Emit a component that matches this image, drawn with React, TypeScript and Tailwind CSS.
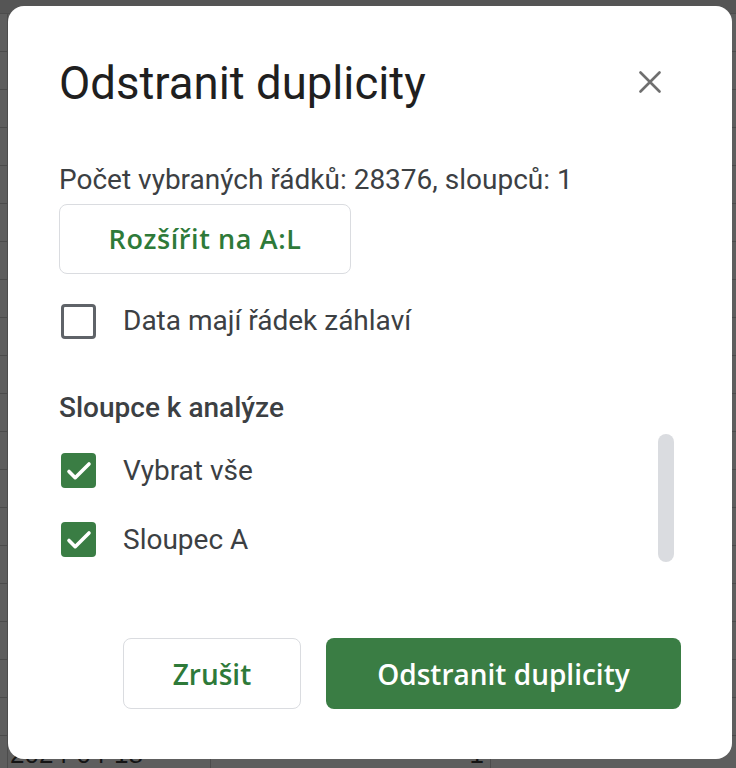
import React from "react";

const rows = Array.from({ length: 20 }, (_, i) => i);

const Check = ({ checked }: { checked: boolean }) =>
    checked ? (
        <div className="w-[35px] h-[35px] rounded-[4px] bg-[#3a7d44] flex items-center justify-center">
            <svg width="28" height="28" viewBox="0 0 28 28" fill="none">
                <path d="M4 14.5l6.2 6.2L24 7" stroke="white" strokeWidth="3.6" strokeLinecap="round" strokeLinejoin="round" />
            </svg>
        </div>
    ) : (
        <div className="w-[35px] h-[35px] rounded-[4px] border-[3px] border-[#5f6368]" />
    );

export default function App() {
    return (
        <div className="relative w-full h-[768px] overflow-hidden bg-[#5e5e5e] font-['Roboto',sans-serif]">
            {/* sheet under the scrim */}
            <div className="flex flex-col">
                <div className="h-[14px] border-b border-[#4c4c4c] bg-[#555555]" />
                {rows.map((r) => (
                    <div key={r} className="h-[38px] flex border-b border-[#4c4c4c]">
                        <div className="w-[8px] border-r border-[#4c4c4c]" />
                        <div className="w-[203px] border-r border-[#4c4c4c] pl-[2px] flex items-center text-[26px] text-[#141414] font-['Liberation_Sans',sans-serif]">
                            {r === 19 ? "2024-04-18" : ""}
                        </div>
                        <div className="w-[280px] border-r border-[#4c4c4c] pr-[6px] flex items-center justify-end text-[26px] text-[#141414] font-['Liberation_Sans',sans-serif]">
                            {r === 19 ? "1" : ""}
                        </div>
                        <div className="flex-1" />
                    </div>
                ))}
            </div>

            {/* dialog */}
            <div className="absolute left-[8px] top-[6px] w-[724px] bg-white rounded-[16px] pl-[51px] pr-[58px] pt-[52px] pb-[50px]">
                <div className="flex items-center justify-between h-[52px]">
                    <h1 className="text-[45.5px] leading-[52px] text-[#1f1f1f] font-normal">Odstranit duplicity</h1>
                    <button className="w-[48px] h-[48px] -mt-[4px] flex items-center justify-center">
                        <svg width="22" height="22" viewBox="0 0 22 22" fill="none">
                            <path d="M1.5 1.5l19 19M20.5 1.5l-19 19" stroke="#6f6f6f" strokeWidth="2.6" strokeLinecap="round" />
                        </svg>
                    </button>
                </div>

                <p className="mt-[52px] text-[28px] leading-[36px] text-[#3c4043]">Počet vybraných řádků: 28376, sloupců: 1</p>
                <button className="mt-[6px] w-[292px] h-[70px] rounded-[8px] border border-[#dadce0] text-[27px] font-semibold text-[#2e7a39] font-['Open_Sans',sans-serif] tracking-[0.6px]">
                    Rozšířit na A:L
                </button>

                <div className="mt-[27px] h-[40px] flex items-center gap-x-[27px] pl-[2px]">
                    <Check checked={false} />
                    <span className="text-[28px] text-[#3c4043]">Data mají řádek záhlaví</span>
                </div>

                <h2 className="mt-[49px] text-[28px] leading-[36px] font-medium text-[#3c4043]">Sloupce k analýze</h2>

                <div className="mt-[8px] h-[128px] flex">
                    <div className="flex-1 overflow-hidden pt-[2px]">
                        {["Vybrat vše", "Sloupec A"].map((label) => (
                            <div key={label} className="h-[69px] flex items-center gap-x-[27px] pl-[2px]">
                                <Check checked={true} />
                                <span className="text-[28px] text-[#3c4043]">{label}</span>
                            </div>
                        ))}
                    </div>
                    <div className="w-[16px] h-full rounded-full bg-[#dadce0]" />
                </div>

                <div className="mt-[76px] flex justify-end gap-x-[25px] -mr-[7px] font-['Open_Sans',sans-serif]">
                    <button className="w-[178px] h-[71px] rounded-[8px] border border-[#dadce0] text-[28px] font-semibold text-[#2e7a39]">
                        Zrušit
                    </button>
                    <button className="w-[355px] h-[71px] rounded-[8px] bg-[#3a7d44] text-[28px] font-semibold text-white">
                        Odstranit duplicity
                    </button>
                </div>
            </div>
        </div>
    );
}
